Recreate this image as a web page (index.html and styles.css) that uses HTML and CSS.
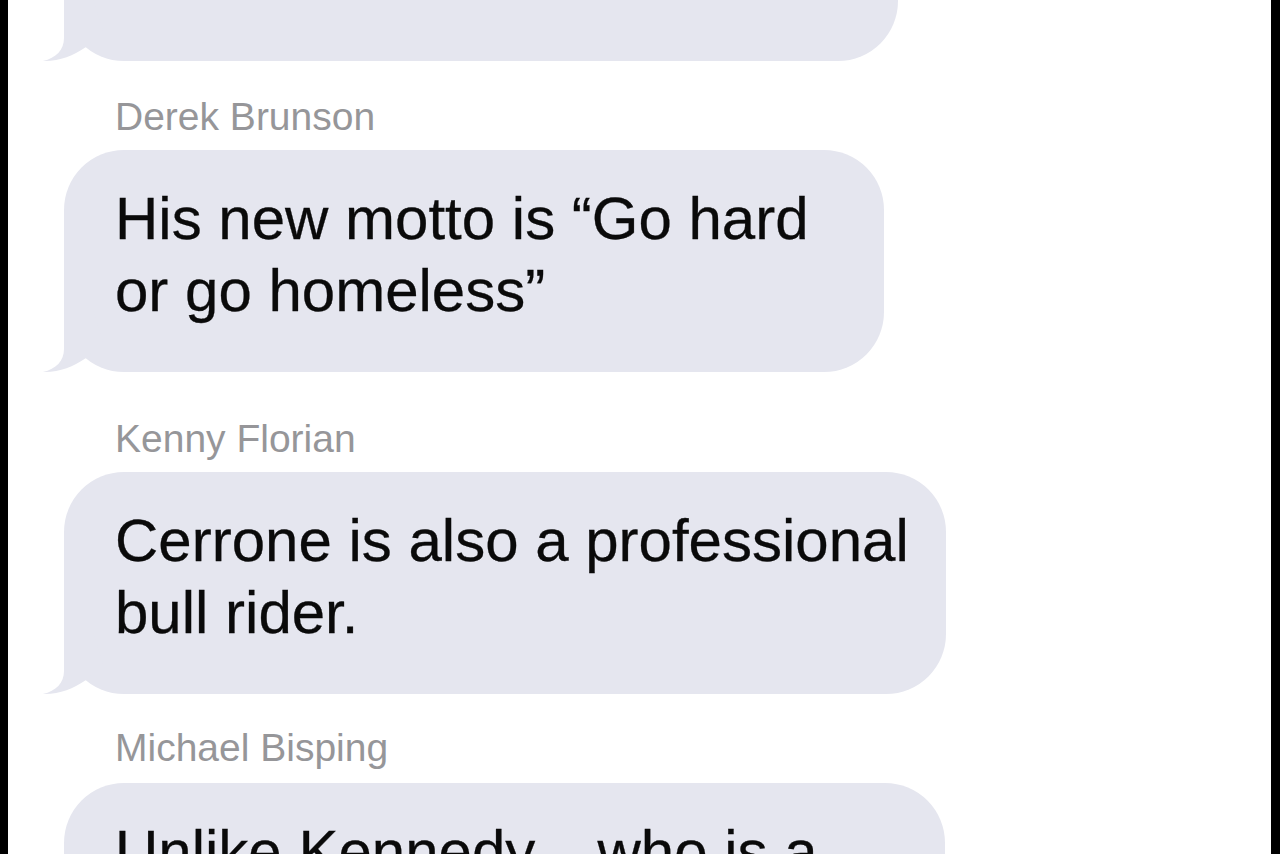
FILE: index.html
```html
<!DOCTYPE html>
<html lang="en">
  <head>
    <meta charset="UTF-8" />
    <meta name="viewport" content="width=device-width, initial-scale=1.0" />
    <title>Messages</title>
    <link rel="stylesheet" href="styles.css">
  </head>
  <body>
    <div class="screen">
      <div class="thread">
        <div class="message">
          <div class="bubble bubble-cut bubble-w834">
            <svg class="tail" viewBox="0 0 70 50"><path d="M21 -12 L21 27 C21 39 13 47 0 50 C16 50.5 30 45 43 36 L60 20 L50 -12 Z" /></svg>
          </div>
        </div>

        <div class="message">
          <div class="sender">Derek Brunson</div>
          <div class="bubble bubble-w820">
            <p>His new motto is “Go hard or go homeless”</p>
            <svg class="tail" viewBox="0 0 70 50"><path d="M21 -12 L21 27 C21 39 13 47 0 50 C16 50.5 30 45 43 36 L60 20 L50 -12 Z" /></svg>
          </div>
        </div>

        <div class="message">
          <div class="sender sender-gap">Kenny Florian</div>
          <div class="bubble bubble-w882">
            <p>Cerrone is also a professional bull rider.</p>
            <svg class="tail" viewBox="0 0 70 50"><path d="M21 -12 L21 27 C21 39 13 47 0 50 C16 50.5 30 45 43 36 L60 20 L50 -12 Z" /></svg>
          </div>
        </div>

        <div class="message">
          <div class="sender sender-last">Michael Bisping</div>
          <div class="bubble bubble-w881">
            <p>Unlike Kennedy... who is a cowboy in name only.</p>
            <svg class="tail" viewBox="0 0 70 50"><path d="M21 -12 L21 27 C21 39 13 47 0 50 C16 50.5 30 45 43 36 L60 20 L50 -12 Z" /></svg>
          </div>
        </div>
      </div>
    </div>
  </body>
</html>
```

FILE: styles.css
```css
html,
body {
  height: 100%;
}
body {
  margin: 0;
  padding: 0;
  background-color: #000;
  font-family: "Liberation Sans", Arial, Helvetica, sans-serif;
  overflow: hidden;
}
.screen {
  height: 100%;
  margin: 0 9px 0 8px;
  background-color: #fff;
  overflow: hidden;
}
.thread {
  padding-left: 56px;
}
.sender {
  margin: 32px 0 10px;
  padding-left: 51px;
  font-size: 39px;
  line-height: 47px;
  color: #969699;
}
.sender-gap {
  margin-top: 43px;
}
.sender-last {
  margin: 30px 0 12px;
}
.bubble {
  position: relative;
  box-sizing: border-box;
  padding: 33px 32px 45px 51px;
  background-color: #e5e6ef;
  border-radius: 60px;
}
.bubble p {
  margin: 0;
  font-size: 60px;
  line-height: 72px;
  color: #0a0a0a;
  -webkit-text-stroke: 0.3px #0a0a0a;
}
.bubble-cut {
  height: 200px;
  margin-top: -139px;
}
.bubble-w834 {
  width: 834px;
}
.bubble-w820 {
  width: 820px;
}
.bubble-w882 {
  width: 882px;
}
.bubble-w881 {
  width: 881px;
}
.tail {
  position: absolute;
  left: -21px;
  bottom: 0;
  width: 70px;
  height: 50px;
  overflow: visible;
  fill: #e5e6ef;
}
```
